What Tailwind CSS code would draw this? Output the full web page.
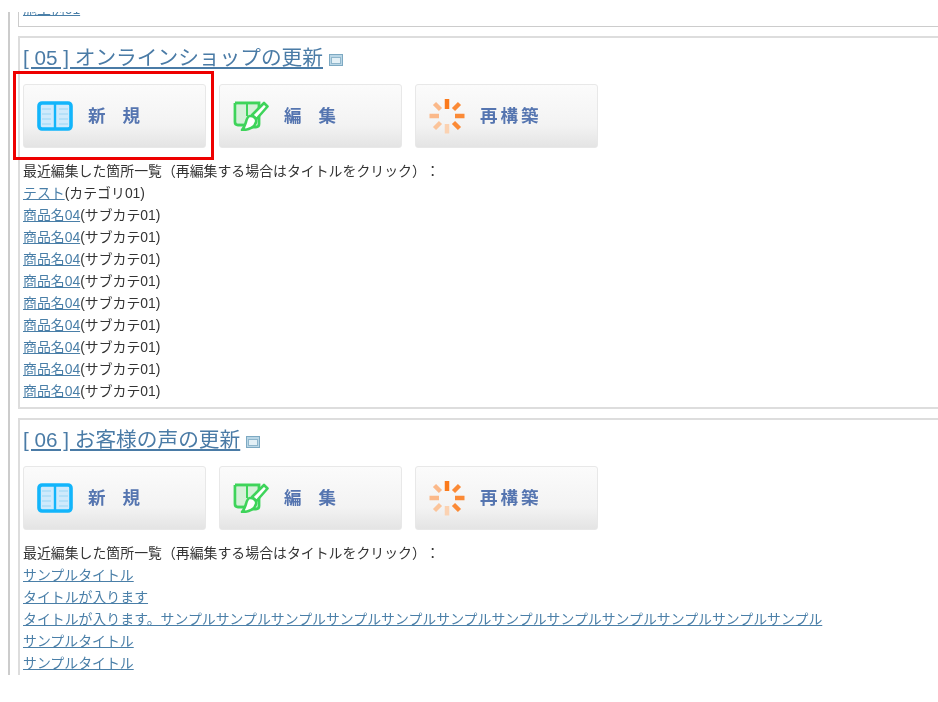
<!DOCTYPE html>
<html lang="ja"><head><meta charset="utf-8">
<script src="https://cdn.jsdelivr.net/npm/@tailwindcss/browser@4"></script>
</head>
<body class="bg-white">
<div class="relative w-[938px] h-[702px] overflow-hidden bg-white font-['Liberation_Sans','Noto_Sans_CJK_JP',sans-serif] text-[13.9px] leading-[22px] text-[#333] [text-spacing-trim:space-all] blur-[0.3px]">
  <div class="h-[675px] overflow-hidden pt-[12px]">
    <div class="ml-[8px] w-[1000px] h-full border-l-2 border-[#ccc] pl-[8px] overflow-hidden">
      <div class="h-[15px] border border-[#ccc] border-t-0 pl-[4px] overflow-hidden flex items-start">
        <a class="text-[#4a7fa8] underline leading-[22px] mt-[-14px]">施工例01</a>
      </div>

      <section class="mt-[9px] h-[373px] border-2 border-[#ddd] border-r-0 pl-[3px] pt-[5px]">
        <h2 class="text-[20.7px] leading-[30px] text-[#4a7ba6] flex items-center"><a class="underline whitespace-pre">[ 05 ] オンラインショップの更新</a>
          <svg class="ml-[6px] mt-[3px]" width="14" height="12" viewBox="0 0 14 12"><rect x="0.5" y="0.5" width="13" height="11" fill="#b9d6e6" stroke="#7da9c2"/><rect x="2.5" y="3.5" width="9" height="6" fill="#e3f0f6" stroke="#8fb6cc"/></svg>
        </h2>
        <div class="mt-[11px] flex gap-[13px]">
          <a class="w-[183px] h-[64px] rounded-[3px] border border-[#e8e8e8] bg-linear-to-b from-[#fbfbfb] via-[#f3f3f3] via-65% to-[#e4e4e4] flex items-center pl-[13px] text-[#5575b0] font-bold text-[17.5px]">
            <svg class="blur-[0.4px]" width="36" height="30" viewBox="0 0 36 30"><rect x="2" y="2" width="32" height="26" rx="3" fill="#cfeafc" stroke="#12b5fb" stroke-width="3.6"/><path d="M18 2v26" stroke="#12b5fb" stroke-width="2.4"/><path d="M5 8h9M5 13h9M5 18h9M5 23h9M22 8h9M22 13h9M22 18h9M22 23h9" stroke="#b5e0f8" stroke-width="2"/></svg>
            <span class="ml-[15px] tracking-[17px]">新規</span>
          </a>
          <a class="w-[183px] h-[64px] rounded-[3px] border border-[#e8e8e8] bg-linear-to-b from-[#fbfbfb] via-[#f3f3f3] via-65% to-[#e4e4e4] flex items-center pl-[13px] text-[#5575b0] font-bold text-[17.5px]">
            <svg class="blur-[0.4px]" width="36" height="30" viewBox="0 0 36 30"><path d="M4 4h21v8l-9 10H4z" fill="#d5f0d8"/><path d="M2 2h24v11M2 2v19c0 2 1 3 3 3h6M26 15v8c0 2-1 3-3 3h-6" fill="none" stroke="#3ed45a" stroke-width="2.8"/><path d="M14 3v12" stroke="#3ed45a" stroke-width="2"/><path d="M19 14L31 2l3.5 3.5-11 12.500z" fill="#fff" stroke="#3ed45a" stroke-width="2.6" stroke-linejoin="round"/><path d="M17 15c4 0 7 3 6 6-1 5-7 8-14 8 2-2 3-5 4-8 1-4 2-6 4-6z" fill="#fff" stroke="#3ed45a" stroke-width="2.6" stroke-linejoin="round"/></svg>
            <span class="ml-[15px] tracking-[17px]">編集</span>
          </a>
          <a class="w-[183px] h-[64px] rounded-[3px] border border-[#e8e8e8] bg-linear-to-b from-[#fbfbfb] via-[#f3f3f3] via-65% to-[#e4e4e4] flex items-center pl-[13px] text-[#5575b0] font-bold text-[17.5px]">
            <svg class="blur-[0.4px]" width="36" height="36" viewBox="0 0 36 36" fill="none" stroke-width="4.5"><path d="M18 1v10" stroke="#fb7a1c"/><path d="M24.500 11.500l6-6" stroke="#fb8a36"/><path d="M26 18h9.500" stroke="#fb8a36"/><path d="M24.500 24.500l6 6" stroke="#fb8a36"/><path d="M18 26v9.500" stroke="#fbd2b2"/><path d="M11.500 24.500l-6 6" stroke="#fbc49a"/><path d="M10 18H.5" stroke="#fbb98a"/><path d="M11.500 11.500l-6-6" stroke="#fbb98a"/></svg>
            <span class="ml-[15px] tracking-[3px]">再構築</span>
          </a>
        </div>
        <p class="mt-[12px]">最近編集した箇所一覧（再編集する場合はタイトルをクリック）：</p>
        <p><a class="text-[#4a7fa8] underline">テスト</a>(カテゴリ01)</p>
        <p><a class="text-[#4a7fa8] underline">商品名04</a>(サブカテ01)</p>
        <p><a class="text-[#4a7fa8] underline">商品名04</a>(サブカテ01)</p>
        <p><a class="text-[#4a7fa8] underline">商品名04</a>(サブカテ01)</p>
        <p><a class="text-[#4a7fa8] underline">商品名04</a>(サブカテ01)</p>
        <p><a class="text-[#4a7fa8] underline">商品名04</a>(サブカテ01)</p>
        <p><a class="text-[#4a7fa8] underline">商品名04</a>(サブカテ01)</p>
        <p><a class="text-[#4a7fa8] underline">商品名04</a>(サブカテ01)</p>
        <p><a class="text-[#4a7fa8] underline">商品名04</a>(サブカテ01)</p>
        <p><a class="text-[#4a7fa8] underline">商品名04</a>(サブカテ01)</p>
      </section>

      <section class="mt-[9px] border-2 border-[#ddd] border-r-0 border-b-0 pl-[3px] pt-[5px] h-[260px]">
        <h2 class="text-[20.7px] leading-[30px] text-[#4a7ba6] flex items-center"><a class="underline whitespace-pre">[ 06 ] お客様の声の更新</a>
          <svg class="ml-[6px] mt-[3px]" width="14" height="12" viewBox="0 0 14 12"><rect x="0.5" y="0.5" width="13" height="11" fill="#b9d6e6" stroke="#7da9c2"/><rect x="2.5" y="3.5" width="9" height="6" fill="#e3f0f6" stroke="#8fb6cc"/></svg>
        </h2>
        <div class="mt-[11px] flex gap-[13px]">
          <a class="w-[183px] h-[64px] rounded-[3px] border border-[#e8e8e8] bg-linear-to-b from-[#fbfbfb] via-[#f3f3f3] via-65% to-[#e4e4e4] flex items-center pl-[13px] text-[#5575b0] font-bold text-[17.5px]">
            <svg class="blur-[0.4px]" width="36" height="30" viewBox="0 0 36 30"><rect x="2" y="2" width="32" height="26" rx="3" fill="#cfeafc" stroke="#12b5fb" stroke-width="3.6"/><path d="M18 2v26" stroke="#12b5fb" stroke-width="2.4"/><path d="M5 8h9M5 13h9M5 18h9M5 23h9M22 8h9M22 13h9M22 18h9M22 23h9" stroke="#b5e0f8" stroke-width="2"/></svg>
            <span class="ml-[15px] tracking-[17px]">新規</span>
          </a>
          <a class="w-[183px] h-[64px] rounded-[3px] border border-[#e8e8e8] bg-linear-to-b from-[#fbfbfb] via-[#f3f3f3] via-65% to-[#e4e4e4] flex items-center pl-[13px] text-[#5575b0] font-bold text-[17.5px]">
            <svg class="blur-[0.4px]" width="36" height="30" viewBox="0 0 36 30"><path d="M4 4h21v8l-9 10H4z" fill="#d5f0d8"/><path d="M2 2h24v11M2 2v19c0 2 1 3 3 3h6M26 15v8c0 2-1 3-3 3h-6" fill="none" stroke="#3ed45a" stroke-width="2.8"/><path d="M14 3v12" stroke="#3ed45a" stroke-width="2"/><path d="M19 14L31 2l3.5 3.5-11 12.500z" fill="#fff" stroke="#3ed45a" stroke-width="2.6" stroke-linejoin="round"/><path d="M17 15c4 0 7 3 6 6-1 5-7 8-14 8 2-2 3-5 4-8 1-4 2-6 4-6z" fill="#fff" stroke="#3ed45a" stroke-width="2.6" stroke-linejoin="round"/></svg>
            <span class="ml-[15px] tracking-[17px]">編集</span>
          </a>
          <a class="w-[183px] h-[64px] rounded-[3px] border border-[#e8e8e8] bg-linear-to-b from-[#fbfbfb] via-[#f3f3f3] via-65% to-[#e4e4e4] flex items-center pl-[13px] text-[#5575b0] font-bold text-[17.5px]">
            <svg class="blur-[0.4px]" width="36" height="36" viewBox="0 0 36 36" fill="none" stroke-width="4.5"><path d="M18 1v10" stroke="#fb7a1c"/><path d="M24.500 11.500l6-6" stroke="#fb8a36"/><path d="M26 18h9.500" stroke="#fb8a36"/><path d="M24.500 24.500l6 6" stroke="#fb8a36"/><path d="M18 26v9.500" stroke="#fbd2b2"/><path d="M11.500 24.500l-6 6" stroke="#fbc49a"/><path d="M10 18H.5" stroke="#fbb98a"/><path d="M11.500 11.500l-6-6" stroke="#fbb98a"/></svg>
            <span class="ml-[15px] tracking-[3px]">再構築</span>
          </a>
        </div>
        <p class="mt-[12px]">最近編集した箇所一覧（再編集する場合はタイトルをクリック）：</p>
        <p><a class="text-[#4a7fa8] underline">サンプルタイトル</a></p>
        <p><a class="text-[#4a7fa8] underline">タイトルが入ります</a></p>
        <p><a class="text-[#4a7fa8] underline">タイトルが入ります。サンプルサンプルサンプルサンプルサンプルサンプルサンプルサンプルサンプルサンプルサンプルサンプル</a></p>
        <p><a class="text-[#4a7fa8] underline">サンプルタイトル</a></p>
        <p><a class="text-[#4a7fa8] underline">サンプルタイトル</a></p>
      </section>
    </div>
  </div>
  <div class="absolute left-[13px] top-[71px] w-[201px] h-[89px] border-[3px] border-[#ee0000]"></div>
</div>
</body></html>
